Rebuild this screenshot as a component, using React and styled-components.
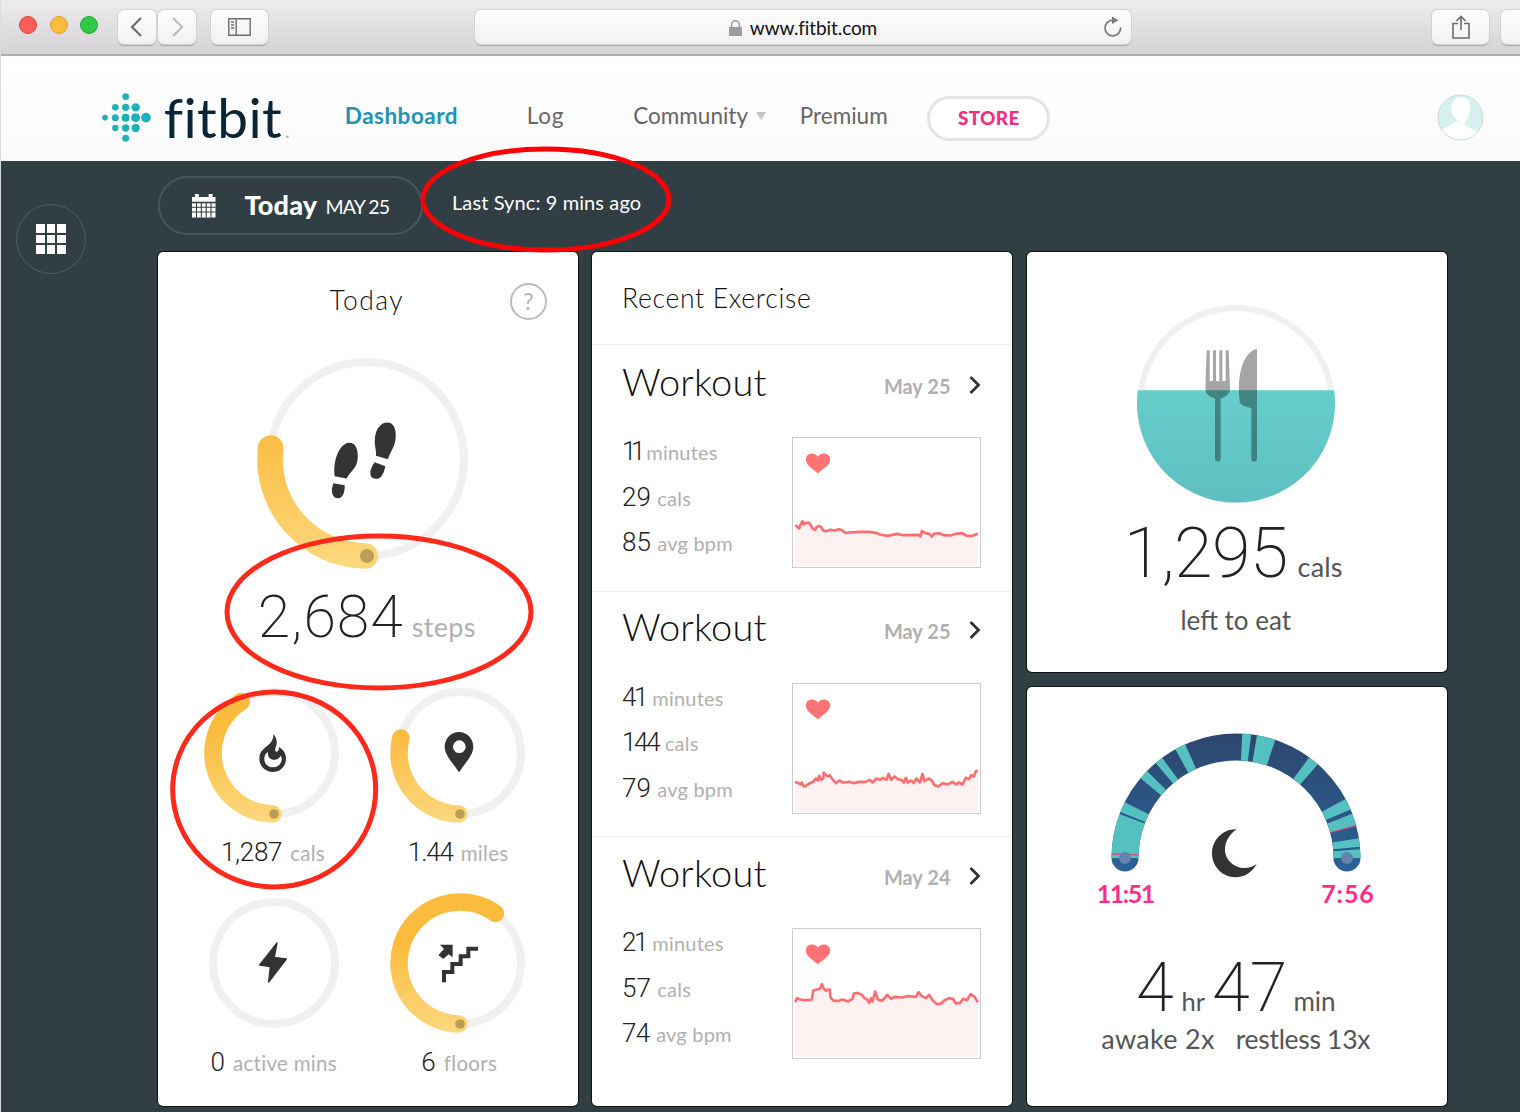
import React from "react";
import styled, { createGlobalStyle } from "styled-components";

const LETTERS = `Lato, "Open Sans", sans-serif`;
const DIGITS = `Roboto, "Open Sans", sans-serif`;

const GlobalStyle = createGlobalStyle`
  * {
    box-sizing: border-box;
  }

  body {
    margin: 0;
    background: #313e43;
    font-family: ${LETTERS};
    font-size: 26px;
    overflow: hidden;
  }

  svg {
    display: block;
    flex: none;
    overflow: visible;
  }
`;

const Window = styled.div`
  position: relative;
  width: 1520px;
  height: 1112px;
  overflow: hidden;
  border-left: 1px solid #dcdcdc;
  background: #313e43;
`;

/* ---------- browser toolbar ---------- */

const Toolbar = styled.div`
  display: flex;
  height: 56px;
  padding: 10px 0 0 18px;
  border-bottom: 2px solid #b0aeb0;
  background: linear-gradient(#edebee, #d5d3d5);
`;

const Lights = styled.div`
  display: flex;
  gap: 12.5px;
  margin: 6px 20px 0 0;
`;

const Light = styled.span`
  width: 18px;
  height: 18px;
  border-radius: 50%;
  border: 1px solid ${(p) => p.$edge};
  background: ${(p) => p.$fill};
`;

const ToolButton = styled.div`
  display: flex;
  flex: none;
  align-items: center;
  justify-content: center;
  width: ${(p) => p.$w}px;
  height: 34px;
  margin-right: ${(p) => p.$gap}px;
  border-radius: 6px;
  background: linear-gradient(#fefefe, #f1f1f1);
  box-shadow: 0 0 0 1px #d3d1d3, 0 1.5px 1px #aaa8aa;
`;

const Address = styled(ToolButton)`
  position: relative;
  padding-top: 1px;
  font: 400 19px/36px ${LETTERS};
  letter-spacing: -0.1px;
  color: #111;
  gap: 8px;
`;

const Reload = styled.div`
  position: absolute;
  right: 8px;
  top: 6px;
`;

/* ---------- site header ---------- */

const Header = styled.header`
  display: flex;
  align-items: flex-start;
  height: 105px;
  padding-left: 99px;
  background: linear-gradient(#fff, #fafafa);
`;

const Mark = styled.div`
  margin-top: 34.5px;
`;

const Wordmark = styled.div`
  width: 128px;
  margin: 27px 53px 0 10.5px;
  font-size: 55px;
  line-height: 68px;
  letter-spacing: 0.4px;
  white-space: nowrap;
  color: #0a2533;
`;

const Trademark = styled.span`
  margin-left: 3px;
  font-size: 20px;
  color: #a9b4ba;
`;

const Nav = styled.nav`
  display: flex;
`;

const NavItem = styled.a`
  display: flex;
  align-items: center;
  gap: 8px;
  width: ${(p) => p.$w}px;
  margin-top: 46px;
  font-size: 22.5px;
  line-height: 28px;
  font-weight: ${(p) => (p.$active ? 700 : 400)};
  letter-spacing: ${(p) => p.$track || 0}px;
  white-space: nowrap;
  color: ${(p) => (p.$active ? "#1f93b3" : "#666")};
`;

const Caret = styled.span`
  border: 5.5px solid transparent;
  border-top: 8px solid #c4c4c4;
  border-bottom: 0;
`;

const Store = styled.a`
  width: 123px;
  height: 45px;
  margin: 40px 387px 0 0;
  border: 3px solid #e4e4e4;
  border-radius: 23px;
  background: #fff;
  font-size: 19px;
  line-height: 38px;
  font-weight: 900;
  letter-spacing: 0.3px;
  text-align: center;
  color: #f52d7e;
`;

const Avatar = styled.div`
  margin-top: 37.5px;
`;

/* ---------- dashboard ---------- */

const Dashboard = styled.main`
  display: flex;
`;

const Rail = styled.aside`
  width: 156.5px;
  padding: 43px 0 0 15px;
`;

const RailButton = styled.div`
  display: grid;
  grid-template-columns: repeat(3, 8.6px);
  grid-auto-rows: 8.6px;
  gap: 1.9px;
  align-content: center;
  justify-content: center;
  width: 70px;
  height: 70px;
  border: 1.5px solid #4d5d68;
  border-radius: 50%;
`;

const RailSquare = styled.span`
  background: #fff;
`;

const Controls = styled.div`
  display: flex;
  height: 91px;
  padding-top: 15px;
`;

const DatePill = styled.div`
  display: flex;
  width: 265px;
  height: 59px;
  padding: 15.5px 0 0 32.5px;
  border: 2px solid #48585f;
  border-radius: 30px;
  color: #fff;
  white-space: nowrap;
`;

const PillTitle = styled.span`
  width: 81px;
  margin-left: 29px;
  font-size: 27px;
  line-height: 21px;
  font-weight: 900;
  letter-spacing: 0.2px;
`;

const PillDate = styled.span`
  font-size: 19.5px;
  line-height: 26px;
  font-weight: 400;
  letter-spacing: -0.9px;
`;

const Sync = styled.span`
  margin-left: 29.5px;
  font-size: 20px;
  line-height: 53px;
  letter-spacing: 0.1px;
  white-space: nowrap;
  color: #fff;
`;

const Columns = styled.div`
  display: flex;
  gap: 14.5px;
`;

const Column = styled.div`
  display: flex;
  flex-direction: column;
  gap: 15px;
  width: 420px;
`;

const Card = styled.section`
  display: flex;
  flex-direction: column;
  align-items: center;
  height: ${(p) => p.$h}px;
  padding: ${(p) => p.$top || 0}px 1.5px 0 0;
  border-radius: 5px;
  background: #fff;
  box-shadow: 0 0 0 1px #0d1517;
`;

const ListCard = styled(Card)`
  align-items: stretch;
  padding: 0;
`;

/* The line box is set by the 26px strut only, so mixed sizes share one baseline. */
const Line = styled.div`
  height: ${(p) => p.$h}px;
  margin-top: ${(p) => p.$mt || 0}px;
  font-size: 26px;
  line-height: ${(p) => p.$h}px;
  white-space: nowrap;
`;

const Num = styled.span`
  margin-left: ${(p) => p.$ml || 0}px;
  font-family: ${DIGITS};
  font-size: ${(p) => p.$size || 26}px;
  line-height: 0;
  font-weight: ${(p) => p.$weight || 350};
  letter-spacing: ${(p) => p.$track || 0}px;
  color: #222;
`;

const Unit = styled.span`
  margin-left: ${(p) => p.$ml || 0}px;
  margin-right: ${(p) => p.$mr || 0}px;
  font-size: ${(p) => p.$size || 20}px;
  line-height: 0;
  letter-spacing: ${(p) => p.$track || 0}px;
  color: ${(p) => (p.$dark ? "#555" : "#b0b0b0")};
`;

const Heading = styled.span`
  font-size: ${(p) => p.$size || 26.5}px;
  line-height: 0;
  font-weight: 300;
  letter-spacing: ${(p) => p.$track || 0}px;
  color: #111;
`;

const TitleRow = styled.div`
  position: relative;
  width: 100%;
  text-align: center;
`;

const Help = styled.span`
  position: absolute;
  right: 29px;
  top: 3px;
  width: 37px;
  height: 37px;
  border: 2px solid #bbb;
  border-radius: 50%;
  font-size: 23px;
  line-height: 33px;
  color: #b5b5b5;
`;

const MainGoal = styled.div`
  margin-top: 18.5px;
`;

const Goals = styled.div`
  display: grid;
  grid-template-columns: 186px 186px;
  row-gap: 24.3px;
  margin-top: 16px;
`;

const Goal = styled.div`
  display: flex;
  flex-direction: column;
  align-items: center;
`;

const ListTitle = styled.div`
  height: 93px;
  padding: 26px 0 0 30px;
  border-bottom: 1.5px solid #eee;
`;

const Workout = styled.article`
  height: 245.5px;
  padding: 16.5px 31.5px 0 30px;

  & + & {
    border-top: 1.5px solid #eee;
    padding-top: 15.5px;
  }
`;

const WorkoutHead = styled.div`
  display: flex;
  align-items: center;
`;

const WorkoutDate = styled.span`
  flex: 1;
  margin-right: 18px;
  font-size: 20px;
  line-height: 24px;
  font-weight: 700;
  text-align: right;
  color: #b0b0b0;
`;

const Chevron = styled.svg`
  width: 11px;
  height: 18px;
  margin: -2px 1px 0 0;
`;

const WorkoutBody = styled.div`
  display: flex;
  justify-content: space-between;
  margin-top: 18.5px;
`;

const Chart = styled.div`
  width: 189px;
  height: 131px;
  margin-top: 9px;
  border: 1.5px solid #ccc;
`;

const Times = styled.div`
  display: flex;
  justify-content: space-between;
  width: 278px;
`;

const Time = styled.span`
  font-size: 25px;
  line-height: 36px;
  font-weight: 700;
  letter-spacing: ${(p) => p.$track}px;
  color: #ff2d86;
`;

const Annotations = styled.svg`
  position: absolute;
  left: -1px;
  top: 0;
  pointer-events: none;
`;

/* ---------- drawings ---------- */

const polar = (r, deg) => {
  const a = (deg * Math.PI) / 180;
  return [-r * Math.cos(a), -r * Math.sin(a)];
};

// Angles run clockwise from the left end of the ring.
const arc = (r, from, to) => {
  const [x1, y1] = polar(r, from);
  const [x2, y2] = polar(r, to);
  const large = to - from > 180 ? 1 : 0;
  return `M${x1} ${y1}A${r} ${r} 0 ${large} 1 ${x2} ${y2}`;
};

const Ring = ({ id, size, r, width, end, children }) => (
  <svg width={size} height={size} viewBox={`${-size / 2} ${-size / 2} ${size} ${size}`}>
    <defs>
      <linearGradient id={id} gradientUnits="userSpaceOnUse" x1="0" y1={-r} x2="0" y2={r + width / 2}>
        <stop offset="0.3" stopColor="#fbbb3d" />
        <stop offset="1" stopColor="#fcd87e" />
      </linearGradient>
    </defs>
    <circle r={r} fill="none" stroke="#f0f0f0" strokeWidth="8" />
    {end !== undefined && (
      <>
        <path d={arc(r, -89, end)} fill="none" stroke={`url(#${id})`} strokeWidth={width} strokeLinecap="round" />
        <circle cy={r} r={width > 20 ? 7 : 4.8} fill="#bd9e55" />
      </>
    )}
    {children}
  </svg>
);

const Steps = () => (
  <g transform="scale(.3333) translate(-653 -625.5)" fill="#333">
    <path d="M600 577C620 577 627 600 625 625C623 655 600 665 592 684L556 677C552 650 558 620 568 602C578 586 588 577 600 577Z" />
    <path d="M552 698L586 704C587 725 580 743 566 743C548 743 543 722 552 698Z" />
    <path d="M714 516C735 516 741 540 739 562C737 590 722 605 716 626L680 616C682 600 674 585 677 560C680 535 695 516 714 516Z" />
    <path d="M676 635L708 647C704 668 696 685 680 685C660 685 656 662 676 635Z" />
  </g>
);

const Flame = () => (
  <g transform="scale(.3333) translate(-372 -279)" fill="#333">
    <path
      fillRule="evenodd"
      d="M370 221C383 238 382 250 377 262C375 269 375 273 378 275C385 275 388 268 386 261C401 268 408 282 408 296C408 319 390 336 369 336C346 336 328 318 328 296C328 272 345 265 357 253C367 243 371 234 370 221ZM343 297C343 287 347 281 354 276C352 290 360 300 375 299C385 298 390 292 391 287C396 292 396 297 395 300C393 314 382 322 369 322C354 322 343 311 343 297Z"
    />
  </g>
);

const Pin = () => (
  <g transform="scale(.3333) translate(-930 -279)" fill="#333">
    <path
      fillRule="evenodd"
      d="M927 216C951 216 970 236 970 260C970 285 945 310 927 337C909 310 884 285 884 260C884 236 903 216 927 216ZM947 260A19 19 0 1 0 909 260A19 19 0 1 0 947 260Z"
    />
  </g>
);

const Bolt = () => (
  <g transform="scale(.3333) translate(-372 -910)" fill="#333" stroke="#333" strokeWidth="4" strokeLinejoin="round">
    <path d="M381 850L373 893L409 898L356 967L361 921L329 916Z" />
  </g>
);

const Stairs = () => (
  <g transform="scale(.3333) translate(-932 -910)">
    <path d="M884 968V937H909V913H934V890H957V867H986" fill="none" stroke="#333" strokeWidth="12" />
    <path d="M872 855H910V893L898 884L882 898L867 886L884 868Z" fill="#333" />
  </g>
);

const heartRates = {
  first:
    "8,264 14,268 20,274 24,262 30,252 33,262 38,258 48,256 54,262 60,274 68,278 72,270 80,266 86,270 92,280 100,282 115,278 125,280 140,276 150,280 158,287 170,286 200,284 230,284 250,287 262,292 285,296 300,293 315,290 330,294 380,293 384,298 388,282 400,288 410,290 418,298 424,290 440,288 455,294 475,295 490,290 510,288 522,296 540,296 556,290",
  second:
    "8,296 18,300 24,304 28,298 34,310 44,306 52,300 62,296 70,286 76,292 80,278 86,290 92,286 94,268 100,276 106,280 112,276 120,288 130,300 140,292 152,298 170,296 184,300 200,296 220,296 232,290 240,298 252,286 262,290 272,284 282,290 288,272 296,290 306,280 316,288 326,290 334,298 340,284 346,298 356,292 364,300 372,286 382,298 390,272 396,294 408,286 418,292 426,306 438,310 450,300 466,304 480,296 490,304 500,298 510,304 520,284 530,288 536,276 544,280 550,264 556,262",
  third:
    "8,222 14,210 24,214 34,216 50,216 58,214 62,188 72,184 82,182 88,168 94,182 102,188 106,184 112,184 114,208 124,218 140,218 150,214 166,220 180,212 184,196 196,194 208,200 216,210 224,214 230,224 236,210 240,220 248,190 256,214 268,218 276,210 284,200 296,212 306,206 330,208 344,204 370,206 378,192 388,204 400,210 410,200 420,216 432,228 446,226 456,216 470,210 482,212 490,226 502,224 512,212 524,216 534,198 546,206 556,222",
};

const HeartChart = ({ points }) => (
  <Chart>
    <svg width="186" height="128" viewBox="1.5 2.5 558 384">
      <polygon points={`8,386 ${points} 556,386`} fill="#fef1f1" />
      <polyline points={points} fill="none" stroke="#fb6f70" strokeWidth="8" strokeLinejoin="round" />
      <path
        d="M76 108C62 96 40 84 40 67C40 56 48 49 58 49C67 49 73 53 76 59C79 53 86 49 94 49C105 49 113 56 113 67C113 84 90 96 76 108Z"
        fill="#ff7375"
      />
    </svg>
  </Chart>
);

const Plate = () => (
  <svg width="200" height="200" viewBox="-100 -100 200 200">
    <defs>
      <linearGradient id="plate" x1="0" y1="0" x2="0" y2="1">
        <stop offset="0" stopColor="#65cecb" />
        <stop offset="1" stopColor="#5fbfc1" />
      </linearGradient>
    </defs>
    <circle r="96" fill="none" stroke="#f0f0f0" strokeWidth="6" />
    <path d="M-98.1 -13.7H98.1A99 99 0 1 1 -98.1 -13.7Z" fill="url(#plate)" />
    <g transform="scale(.3333) translate(-438 -371)" fill="#000" fillOpacity=".35">
      <path d="M350 210H359V302H369V210H378V302H388V210H397V302H407V210H416L420 325C420 340 408 350 392 354V536C392 547 375 547 375 536V354C358 350 346 340 346 325Z" />
      <path d="M501 206V536C501 547 484 547 484 536V386C480 378 460 382 450 368C444 330 446 290 455 260C463 235 480 208 501 206Z" />
    </g>
  </svg>
);

const restless = [
  [0, 20.7],
  [21.7, 26.6],
  [39.9, 44.3],
  [49.8, 53.6],
  [60.8, 65.9],
  [92.9, 97],
  [99.7, 108.4],
  [126, 131.1],
  [151.7, 157.1],
  [159.2, 164.8],
  [170.9, 174.8],
  [176, 180],
];

const awake = [
  [1.5, 2.2],
  [164.6, 165.2],
];

const SleepArc = () => (
  <svg width="250" height="147.5" viewBox="-125 -130 250 147.5">
    <defs>
      <linearGradient id="asleep" gradientUnits="userSpaceOnUse" x1="0" y1="-125" x2="0" y2="14">
        <stop offset="0" stopColor="#2d466e" />
        <stop offset="1" stopColor="#2a6297" />
      </linearGradient>
    </defs>
    <g fill="none" strokeWidth="27">
      <path d={arc(111, 0, 180)} stroke="url(#asleep)" strokeLinecap="round" />
      {restless.map(([from, to]) => (
        <path key={from} d={arc(111, from, to)} stroke="#54c1c0" />
      ))}
      {awake.map(([from, to]) => (
        <path key={from} d={arc(111, from, to)} stroke="#d94c7c" />
      ))}
    </g>
    <circle cx="-111" r="6" fill="#6483ad" />
    <circle cx="111" r="6" fill="#6483ad" />
    <path
      transform="scale(.3333) translate(-468 -474)"
      d="M470 388C430 385 396 420 396 460C396 500 428 532 466 532C495 532 518 515 530 492C510 507 484 507 466 497C424 476 424 420 470 388Z"
      fill="#333"
    />
  </svg>
);

const logoDots = [
  [377, 289, 10],
  [346, 321, 10],
  [377, 321, 11],
  [407, 321, 12.5],
  [315, 352, 8.5],
  [346, 352, 10.5],
  [377, 352, 12],
  [407, 352, 13.5],
  [438, 352, 14.5],
  [346, 383, 9.5],
  [377, 383, 11],
  [407, 383, 12.5],
  [377, 414, 10.5],
];

const Calendar = () => (
  <svg width="23.5" height="23.5" viewBox="0 0 24 24">
    <path d="M0 3H3V0H7V3H17V0H21V3H24V8H0Z" fill="#fff" />
    <path d="M0 9.5H24V24H0Z" fill="#fff" />
    <path d="M0 13.6H24M0 18.4H24M4.6 9V24M9.5 9V24M14.5 9V24M19.4 9V24" stroke="#313e43" strokeWidth="1.1" />
  </svg>
);

/* ---------- page parts ---------- */

const BrowserBar = () => (
  <Toolbar>
    <Lights>
      <Light $fill="#fc5e5a" $edge="#e2463f" />
      <Light $fill="#fdbd3f" $edge="#e0a02f" />
      <Light $fill="#33c748" $edge="#22ab35" />
    </Lights>
    <ToolButton $w={38} $gap={2}>
      <svg width="12" height="20" viewBox="1 0 12 20">
        <path d="M11 1L2 10L11 19" fill="none" stroke="#6d6d6d" strokeWidth="2.2" />
      </svg>
    </ToolButton>
    <ToolButton $w={38} $gap={15}>
      <svg width="12" height="20" viewBox="0 0 12 20">
        <path d="M2 1L11 10L2 19" fill="none" stroke="#bdbdbd" strokeWidth="2.2" />
      </svg>
    </ToolButton>
    <ToolButton $w={57} $gap={207}>
      <svg width="23" height="18" viewBox="0 0 23 18">
        <path
          d="M.8.8H22.2V17.2H.8ZM8.2.8V17.2M3 4H6M3 7H6M3 10H6"
          fill="none"
          stroke="#6d6d6d"
          strokeWidth="1.4"
        />
      </svg>
    </ToolButton>
    <Address $w={656} $gap={301}>
      <svg width="13" height="16" viewBox="0 0 13 16">
        <path d="M0 7H13V16H0Z" fill="#9c9c9c" />
        <path d="M2.6 8V4.8A3.9 4 0 0 1 10.4 4.8V8" fill="none" stroke="#9c9c9c" strokeWidth="1.6" />
      </svg>
      www.fitbit.com
      <Reload>
        <svg width="20" height="22" viewBox="0 0 20 22">
          <path d="M9.6 4.2A7.8 7.8 0 1 0 17.6 11.4" fill="none" stroke="#7a7a7a" strokeWidth="1.7" />
          <path d="M9 .4L15.4 4.2L9 8Z" fill="#7a7a7a" />
        </svg>
      </Reload>
    </Address>
    <ToolButton $w={57} $gap={12}>
      <svg width="18" height="24" viewBox="0 0 18 24">
        <path d="M6 8.5H1V23H17V8.5H12M9 15V1.5M4.4 6L9 1.4L13.6 6" fill="none" stroke="#6d6d6d" strokeWidth="1.6" />
      </svg>
    </ToolButton>
    <ToolButton $w={57} $gap={0} />
  </Toolbar>
);

const SiteHeader = () => (
  <Header>
    <Mark>
      <svg width="53.3" height="53.3" viewBox="300 272 160 160" fill="#1fb1b9">
        {logoDots.map(([cx, cy, r]) => (
          <circle key={`${cx}-${cy}`} cx={cx} cy={cy} r={r} />
        ))}
      </svg>
    </Mark>
    <Wordmark>
      fitbit<Trademark>.</Trademark>
    </Wordmark>
    <Nav>
      <NavItem $active $w={182} $track={0.5}>
        Dashboard
      </NavItem>
      <NavItem $w={106.5} $track={0.8}>
        Log
      </NavItem>
      <NavItem $w={166.5}>
        Community <Caret />
      </NavItem>
      <NavItem $w={127.5}>Premium</NavItem>
    </Nav>
    <Store>STORE</Store>
    <Avatar>
      <svg width="47" height="47" viewBox="0 0 47 47">
        <defs>
          <clipPath id="face">
            <circle cx="23.5" cy="23.5" r="22.5" />
          </clipPath>
        </defs>
        <circle cx="23.5" cy="23.5" r="22.5" fill="#d6efef" />
        <path
          clipPath="url(#face)"
          d="M24 3C30 3 33.5 8 33 14C33 20 31 25 28 28V31L42 39V47H4V36L15 30C18 28 20 28 21 27C16 23 14 19 14.5 12C15 7 19 3 24 3Z"
          fill="#fff"
        />
        <circle cx="23.5" cy="23.5" r="22.5" fill="none" stroke="#c9dedd" />
      </svg>
    </Avatar>
  </Header>
);

const goals = [
  { id: "cals", value: "1,287", track: -0.3, unit: "cals", pad: 1.5, end: 57.5, icon: <Flame /> },
  { id: "miles", value: "1.44", track: -1.2, unit: "miles", pad: 3, end: 14.3, icon: <Pin /> },
  { id: "mins", value: "0", unit: "active mins", end: null, icon: <Bolt /> },
  { id: "floors", value: "6", unit: "floors", pad: 1, end: 125.5, icon: <Stairs /> },
];

const TodayCard = () => (
  <Card $h={854} $top={28}>
    <TitleRow>
      <Line $h={40}>
        <Heading $track={1.4}>Today</Heading>
      </Line>
      <Help>?</Help>
    </TitleRow>
    <MainGoal>
      <Ring id="steps" size={240} r={97} width={25.5} end={6.5}>
        <Steps />
      </Ring>
    </MainGoal>
    <Line $h={80} $mt={8.5}>
      <Num $size={59} $weight={200} $track={1}>
        2,684
      </Num>
      <Unit $ml={8} $size={27} $track={0.3}>
        steps
      </Unit>
    </Line>
    <Goals>
      {goals.map((goal) => (
        <Goal key={goal.id}>
          <Ring id={goal.id} size={140} r={61} width={17.5} end={goal.end ?? undefined}>
            {goal.icon}
          </Ring>
          <Line $h={36} $mt={10}>
            <Num $track={goal.track}>{goal.value}</Num>
            <Unit $ml={8} $mr={goal.pad} $size={20.5} $track={0.3}>
              {goal.unit}
            </Unit>
          </Line>
        </Goal>
      ))}
    </Goals>
  </Card>
);

const workouts = [
  {
    id: "first",
    date: "May 25",
    stats: [
      { value: 11, unit: "minutes", track: -5.5 },
      { value: 29, unit: "cals" },
      { value: 85, unit: "avg bpm" },
    ],
  },
  {
    id: "second",
    date: "May 25",
    stats: [
      { value: 41, unit: "minutes", track: -2.5 },
      { value: 144, unit: "cals", track: -2.3 },
      { value: 79, unit: "avg bpm" },
    ],
  },
  {
    id: "third",
    date: "May 24",
    stats: [
      { value: 21, unit: "minutes", track: -2.5 },
      { value: 57, unit: "cals" },
      { value: 74, unit: "avg bpm", track: -0.6 },
    ],
  },
];

const ExerciseCard = () => (
  <ListCard $h={854}>
    <ListTitle>
      <Line $h={40}>
        <Heading $track={0.7}>Recent Exercise</Heading>
      </Line>
    </ListTitle>
    {workouts.map((item) => (
      <Workout key={item.id}>
        <WorkoutHead>
          <Line $h={48}>
            <Heading $size={38} $track={0.2}>
              Workout
            </Heading>
          </Line>
          <WorkoutDate>{item.date}</WorkoutDate>
          <Chevron viewBox="0 0 11 18">
            <path d="M1.5 1L9.5 9L1.5 17" fill="none" stroke="#333" strokeWidth="2.8" />
          </Chevron>
        </WorkoutHead>
        <WorkoutBody>
          <div>
            {item.stats.map((stat) => (
              <Line key={stat.unit} $h={45.7}>
                <Num $track={stat.track}>{stat.value}</Num>
                <Unit $ml={6.5} $track={0.2}>
                  {stat.unit}
                </Unit>
              </Line>
            ))}
          </div>
          <HeartChart points={heartRates[item.id]} />
        </WorkoutBody>
      </Workout>
    ))}
  </ListCard>
);

const FoodCard = () => (
  <Card $h={419.5} $top={51.7}>
    <Plate />
    <Line $h={60} $mt={33.8}>
      <Num $size={70} $weight={200} $track={-0.7}>
        1,295
      </Num>
      <Unit $dark $ml={10} $mr={5} $size={27} $track={0.2}>
        cals
      </Unit>
    </Line>
    <Line $h={40} $mt={2.5}>
      <Unit $dark $size={26}>
        left to eat
      </Unit>
    </Line>
  </Card>
);

const SleepCard = () => (
  <Card $h={419.5} $top={41}>
    <SleepArc />
    <Times>
      <Time $track={-1.5}>11:51</Time>
      <Time $track={0.9}>7:56</Time>
    </Times>
    <Line $h={40} $mt={70}>
      <Num $size={68.5} $weight={200}>
        4
      </Num>
      <Unit $dark $ml={8} $size={25.5}>
        hr
      </Unit>
      <Num $ml={7} $size={68.5} $weight={200}>
        47
      </Num>
      <Unit $dark $ml={6} $size={26}>
        min
      </Unit>
    </Line>
    <Line $h={40} $mt={-2.5}>
      <Unit $dark $size={27} $track={0.3}>
        awake 2x
      </Unit>
      <Unit $dark $ml={21} $size={26.5} $track={-0.3}>
        restless 13x
      </Unit>
    </Line>
  </Card>
);

const App = () => (
  <>
    <GlobalStyle />
    <Window>
      <BrowserBar />
      <SiteHeader />
      <Dashboard>
        <Rail>
          <RailButton>
            {[...Array(9)].map((_, index) => (
              <RailSquare key={index} />
            ))}
          </RailButton>
        </Rail>
        <div>
          <Controls>
            <DatePill>
              <Calendar />
              <PillTitle>Today</PillTitle>
              <PillDate>MAY 25</PillDate>
            </DatePill>
            <Sync>Last Sync: 9 mins ago</Sync>
          </Controls>
          <Columns>
            <Column>
              <TodayCard />
            </Column>
            <Column>
              <ExerciseCard />
            </Column>
            <Column>
              <FoodCard />
              <SleepCard />
            </Column>
          </Columns>
        </div>
      </Dashboard>
      <Annotations width="1520" height="1112" fill="none" strokeWidth="5">
        <ellipse cx="546" cy="199.5" rx="123" ry="50.5" stroke="#fb0007" />
        <ellipse cx="379" cy="612" rx="152" ry="76" stroke="#fc2a1c" />
        <ellipse cx="274.2" cy="789.5" rx="101.5" ry="97.5" stroke="#fc2a1c" />
      </Annotations>
    </Window>
  </>
);

export default App;
